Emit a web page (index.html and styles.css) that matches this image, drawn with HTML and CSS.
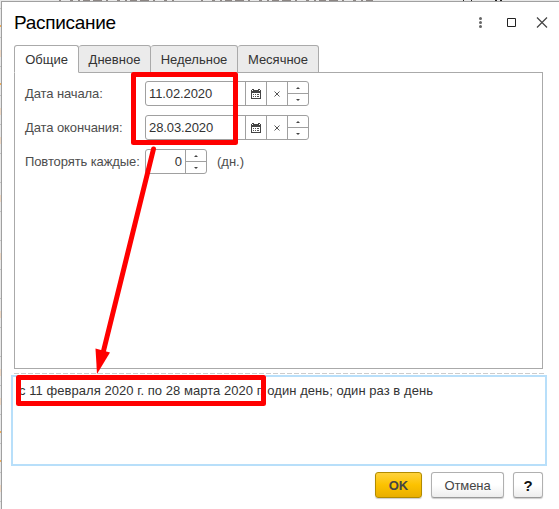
FILE: index.html
```html
<!DOCTYPE html>
<html lang="ru">
<head>
<meta charset="utf-8">
<title>Расписание</title>
<link rel="stylesheet" href="styles.css">
</head>
<body>
<svg width="0" height="0" class="defs">
  <symbol id="calendar" viewBox="0 0 10 10"><path fill="#444" d="M1 0h2v1h4V0h2v1h1v9H0V1h1z"/><path fill="#fff" d="M1 4h8v5H1zM1 2h1V1H1zM8 2h1V1H8z"/><path fill="#555" d="M2 5h1v1H2zM4 5h1v1H4zM6 5h2v1H6zM2 7h1v1H2zM4 7h1v1H4zM6 7h2v1H6z"/></symbol>
  <symbol id="clear" viewBox="0 0 6 6"><path d="M.5.5l5 5M5.5.5l-5 5" stroke="#555"/></symbol>
  <symbol id="up" viewBox="0 0 4 2"><path d="M0 2L2 0l2 2z" fill="#444"/></symbol>
  <symbol id="down" viewBox="0 0 4 2"><path d="M0 0h4L2 2z" fill="#444"/></symbol>
</svg>
<svg class="backdrop" width="559" height="509" viewBox="0 0 559 509">
  <path d="M59 .5H176M201 .5H376" stroke="#8b8583" stroke-dasharray="2 9 3 5 2 3 7 3 9 4"/>
  <path d="M463 .5h1M471 .5h1M495 .5h2M500 .5h2" stroke="#222"/>
  <path d="M.5 8V509" stroke="#c4c4c4" stroke-dasharray="1 28"/>
  <path d="M.5 25v2M.5 83v2M.5 431v2M.5 460v2" stroke="#f0ad58"/>
  <path d="M.5 50v7M.5 108v7M.5 137v7M.5 195v7M.5 253v7M.5 311v7M.5 369v7M.5 398v7M.5 485v7" stroke="#f0d9c4"/>
</svg>
<div class="window">
  <header class="titlebar">
    <h1>Расписание</h1>
    <svg class="controls" width="70" height="14" viewBox="0 0 70 14">
      <g fill="#666"><circle cx="2.500" cy="3.500" r="1.500"/><circle cx="2.500" cy="7.500" r="1.500"/><circle cx="2.500" cy="11.500" r="1.500"/></g>
      <path d="M29.500 3.500h8v8h-8z" fill="none" stroke="#222"/>
      <path d="M59 2.500l10 10M69 2.500l-10 10" stroke="#444" stroke-width="1.200"/>
    </svg>
  </header>
  <nav class="tabs">
    <div class="tab active t1"><span>Общие</span></div>
    <div class="tab t2"><span>Дневное</span></div>
    <div class="tab t3"><span>Недельное</span></div>
    <div class="tab t4"><span>Месячное</span></div>
  </nav>
  <main class="panel">
    <div class="row">
      <label>Дата начала:</label>
      <div class="field">
        <span class="value">11.02.2020</span>
        <span class="cell"><svg width="10" height="10"><use href="#calendar"/></svg></span>
        <span class="cell"><svg width="6" height="6"><use href="#clear"/></svg></span>
        <span class="spin"><i><svg width="4" height="2"><use href="#up"/></svg></i><i><svg width="4" height="2"><use href="#down"/></svg></i></span>
      </div>
    </div>
    <div class="row">
      <label>Дата окончания:</label>
      <div class="field">
        <span class="value">28.03.2020</span>
        <span class="cell"><svg width="10" height="10"><use href="#calendar"/></svg></span>
        <span class="cell"><svg width="6" height="6"><use href="#clear"/></svg></span>
        <span class="spin"><i><svg width="4" height="2"><use href="#up"/></svg></i><i><svg width="4" height="2"><use href="#down"/></svg></i></span>
      </div>
    </div>
    <div class="row">
      <label>Повторять каждые:</label>
      <div class="field number">
        <span class="value">0</span>
        <span class="spin"><i><svg width="4" height="2"><use href="#up"/></svg></i><i><svg width="4" height="2"><use href="#down"/></svg></i></span>
      </div>
      <span class="unit">(дн.)</span>
    </div>
  </main>
  <div class="splitter"></div>
  <div class="summary">с 11 февраля 2020 г. по 28 марта 2020 г. один день; один раз в день</div>
  <footer class="buttons">
    <button class="ok">OK</button>
    <button class="cancel">Отмена</button>
    <button class="help">?</button>
  </footer>
</div>
<svg class="marks" width="559" height="509" viewBox="0 0 559 509">
  <g fill="none" stroke="#f00" stroke-width="5" stroke-linejoin="round">
    <rect x="133.500" y="74.500" width="102" height="68"/>
    <rect x="18.500" y="377.500" width="245" height="26"/>
    <path d="M153.500 149L103 353" stroke-linecap="round"/>
  </g>
  <path d="M95.500 348.500L110 352.500 97 374z" fill="#f00"/>
</svg>
</body>
</html>
```
FILE: styles.css
```css
* { box-sizing: border-box; }
body {
  margin: 0;
  width: 559px;
  height: 509px;
  overflow: hidden;
  padding: 1px 0 0 1px;
  background: #e8e8e8;
  font: 13px/16px "Liberation Sans", Arial, sans-serif;
  color: #333;
}
.defs { position: absolute; }
.backdrop { position: absolute; left: 0; top: 0; }
.window {
  position: relative;
  height: 508px;
  border-left: 1px solid #a0a0a0;
  border-top: 1px solid #a0a0a0;
  background: #fff;
  padding: 0 15px 0 12px;
}
.titlebar { height: 43px; display: flex; justify-content: space-between; padding-top: 10px; }
h1 { margin: 0; font-size: 19px; line-height: 22px; font-weight: 400; color: #000; letter-spacing: -0.3px; }
.controls { margin: 3px -4px 0 0; }
.tabs { display: flex; height: 27px; }
.tab {
  position: relative;
  height: 28px;
  border: 1px solid #aaa;
  border-left-width: 0;
  background: #ebebeb;
  border-radius: 3px 3px 0 0;
  text-align: center;
  line-height: 27px;
  letter-spacing: 0;
}
.tab.active { border-left-width: 1px; border-bottom-color: #fff; background: #fff; }
.t1 { width: 65px; }
.t2 { width: 72px; }
.t3 { width: 87px; }
.t4 { width: 81px; }
.panel {
  height: 297px;
  width: 529px;
  border: 1px solid #aaa;
  padding: 8px 10px;
}
.row { display: flex; height: 25px; margin-bottom: 9px; align-items: center; }
label { width: 120px; color: #4d4d4d; letter-spacing: -0.1px; white-space: nowrap; }
.field {
  display: flex;
  width: 164px;
  height: 25px;
  border: 1px solid #a0a0a0;
  border-radius: 3px;
  line-height: 23px;
}
.value { flex: 1; padding-left: 3px; letter-spacing: -0.1px; }
.cell { width: 21px; border-left: 1px solid #a0a0a0; display: flex; align-items: center; justify-content: center; }
.spin { width: 21px; border-left: 1px solid #a0a0a0; display: flex; flex-direction: column; }
.spin i { flex: 1; display: flex; align-items: center; justify-content: center; }
.spin i + i { border-top: 1px solid #a0a0a0; }
.number { width: 62px; }
.number .value { text-align: right; padding-right: 3px; }
.unit { margin-left: 10px; color: #4d4d4d; letter-spacing: 0; }
.splitter {
  height: 1px;
  margin: 4px 0 1px;
  background: repeating-linear-gradient(90deg, #ccc 0 5px, #fff 5px 7px);
}
.summary {
  width: 536px;
  height: 91px;
  margin-left: -3px;
  border: 2px solid #b8dffa;
  padding: 6px;
  letter-spacing: 0.05px;
  white-space: nowrap;
}
.buttons { display: flex; justify-content: flex-end; gap: 9px; padding: 6px 1px 0 0; }
button {
  height: 26px;
  padding: 0;
  border: 1px solid #b0b0b0;
  border-bottom-color: #999;
  border-radius: 3px;
  background: linear-gradient(#fff 50%, #ededed);
  box-shadow: 0 1px 1px #ccc;
  font: 13px "Liberation Sans", Arial, sans-serif;
  color: #444;
  letter-spacing: -0.1px;
}
.ok { width: 47px; border-color: #b28b00; background: linear-gradient(#ffd23c, #fcc200 50%, #e9ae00); font-weight: 700; }
.cancel { width: 73px; }
.help { width: 30px; font-size: 15px; font-weight: 700; color: #111; }
.marks { position: absolute; left: 0; top: 0; }
```
